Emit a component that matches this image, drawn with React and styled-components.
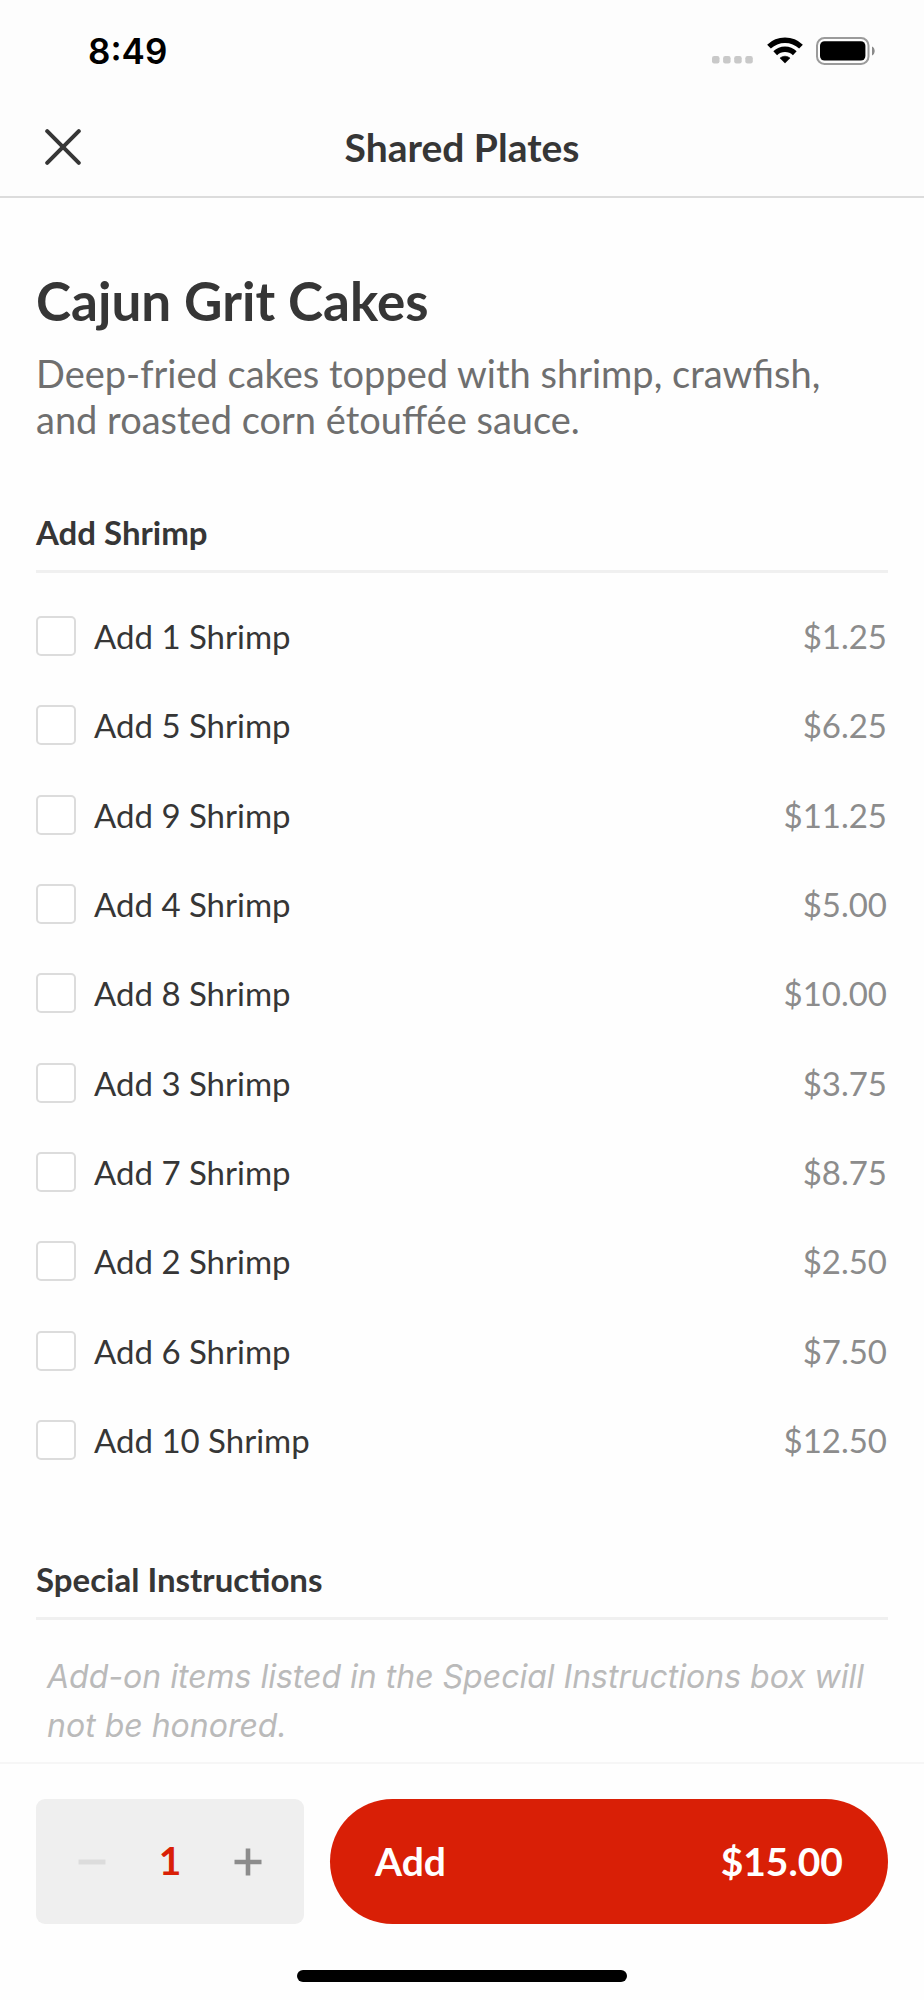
import { useState } from "react";
import styled, { createGlobalStyle } from "styled-components";

const BASE_PRICE = 15;

const shrimpOptions = [
	{ count: 1, price: 1.25 },
	{ count: 5, price: 6.25 },
	{ count: 9, price: 11.25 },
	{ count: 4, price: 5 },
	{ count: 8, price: 10 },
	{ count: 3, price: 3.75 },
	{ count: 7, price: 8.75 },
	{ count: 2, price: 2.5 },
	{ count: 6, price: 7.5 },
	{ count: 10, price: 12.5 },
];

const money = (value) => `$${value.toFixed(2)}`;

const SignalDots = () => (
	<svg width="42" height="28" viewBox="0 0 42 28" fill="#c9c9c9" aria-hidden="true">
		<rect x="0" y="19" width="7.5" height="7.5" rx="2.2" />
		<rect x="11.1" y="19" width="7.5" height="7.5" rx="2.2" />
		<rect x="22.2" y="19" width="7.5" height="7.5" rx="2.2" />
		<rect x="33.3" y="19" width="7.5" height="7.5" rx="2.2" />
	</svg>
);

const WifiIcon = () => (
	<svg width="36" height="28" viewBox="0 0 36 28" fill="none" stroke="#000" strokeWidth="5.4" aria-hidden="true">
		<path d="M2 9.6a23.3 23.3 0 0 1 32 0" />
		<path d="M8.2 16.2a14.2 14.2 0 0 1 19.6 0" />
		<path d="M13 21.1a7.5 7.5 0 0 1 10 0l-5 5z" fill="#000" stroke="#000" strokeWidth="0.6" strokeLinejoin="round" />
	</svg>
);

const BatteryIcon = () => (
	<svg width="60" height="28" viewBox="0 0 60 28" aria-hidden="true">
		<rect x="1" y="1" width="51.5" height="26" rx="7.5" fill="none" stroke="#9b9b9b" strokeWidth="2" />
		<rect x="4" y="4.3" width="45.4" height="19.2" rx="4.5" fill="#000" />
		<path d="M56 9.5c3.6 1.6 3.6 7.4 0 9z" fill="#8a8a8a" />
	</svg>
);

const CloseIcon = () => (
	<svg width="36" height="36" viewBox="0 0 36 36" fill="none" stroke="#363636" strokeWidth="4" strokeLinecap="round" aria-hidden="true">
		<path d="M2.2 2.2l31.6 31.6M33.8 2.2L2.2 33.8" />
	</svg>
);

const MinusIcon = () => (
	<svg width="28" height="28" viewBox="0 0 28 28" aria-hidden="true">
		<path d="M0.5 14h27" stroke="currentColor" strokeWidth="5" />
	</svg>
);

const PlusIcon = () => (
	<svg width="28" height="28" viewBox="0 0 28 28" aria-hidden="true">
		<path d="M0.5 14h27M14 0.5v27" stroke="currentColor" strokeWidth="4.6" />
	</svg>
);

export default function App() {
	const [selected, setSelected] = useState([]);
	const [quantity, setQuantity] = useState(1);

	const toggle = (count) => {
		setSelected((prev) =>
			prev.includes(count) ? prev.filter((c) => c !== count) : [...prev, count]
		);
	};

	const extras = shrimpOptions
		.filter((option) => selected.includes(option.count))
		.reduce((sum, option) => sum + option.price, 0);

	return (
		<>
			<GlobalStyle />
			<Page>
				<Header>
					<StatusBar>
						<Clock>8:49</Clock>
						<StatusIcons>
							<SignalDots />
							<WifiIcon />
							<BatteryIcon />
						</StatusIcons>
					</StatusBar>
					<NavBar>
						<CloseButton type="button" aria-label="Close">
							<CloseIcon />
						</CloseButton>
						<NavTitle>Shared Plates</NavTitle>
					</NavBar>
				</Header>

				<Content>
					<ItemName>Cajun Grit Cakes</ItemName>
					<Description>
						Deep-fried cakes topped with shrimp, crawfish, and roasted corn étouffée sauce.
					</Description>

					<Section $gap={70}>
						<SectionTitle>Add Shrimp</SectionTitle>
						<OptionList>
							{shrimpOptions.map(({ count, price }) => (
								<li key={count}>
									<Option>
										<Checkbox
											type="checkbox"
											checked={selected.includes(count)}
											onChange={() => toggle(count)}
										/>
										<OptionName>Add {count} Shrimp</OptionName>
										<OptionPrice>{money(price)}</OptionPrice>
									</Option>
								</li>
							))}
						</OptionList>
					</Section>

					<Section $gap={99}>
						<SectionTitle as="label" htmlFor="instructions">Special Instructions</SectionTitle>
						<Instructions
							id="instructions"
							rows={2}
							placeholder="Add-on items listed in the Special Instructions box will not be honored."
						/>
					</Section>
				</Content>

				<Footer>
					<Actions>
						<Stepper>
							<StepButton
								type="button"
								aria-label="Decrease quantity"
								disabled={quantity === 1}
								onClick={() => setQuantity(quantity - 1)}
							>
								<MinusIcon />
							</StepButton>
							<Quantity>{quantity}</Quantity>
							<StepButton
								type="button"
								aria-label="Increase quantity"
								onClick={() => setQuantity(quantity + 1)}
							>
								<PlusIcon />
							</StepButton>
						</Stepper>
						<AddButton type="button">
							<span>Add</span>
							<span>{money((BASE_PRICE + extras) * quantity)}</span>
						</AddButton>
					</Actions>
					<HomeIndicator />
				</Footer>
			</Page>
		</>
	);
}

const GlobalStyle = createGlobalStyle`
  * {
    box-sizing: border-box;
  }

  body {
    margin: 0;
    background: #fefefe;
    color: #363636;
    font-family: Lato, "Liberation Sans", sans-serif;
  }

  button, textarea, input {
    margin: 0;
    font: inherit;
  }
`

const Page = styled.div`
  min-height: 100vh;
  display: flex;
  flex-direction: column;
`

const Header = styled.header`
  background: #fdfdfd;
  border-bottom: 2px solid #dcdcdc;
`

const StatusBar = styled.div`
  display: flex;
  justify-content: space-between;
  align-items: center;
  padding: 29px 48px 27px 88px;
`

const Clock = styled.time`
  color: #000;
  font-family: Inter, "Liberation Sans", sans-serif;
  font-size: 35px;
  font-weight: 600;
  line-height: 44px;
`

const StatusIcons = styled.div`
  display: flex;
  align-items: center;
  gap: 13px;
`

const NavBar = styled.div`
  display: grid;
  grid-template-columns: 36px 1fr 36px;
  align-items: center;
  padding: 24px 45px 26px;
`

const CloseButton = styled.button`
  display: flex;
  padding: 0;
  border: 0;
  background: none;
  cursor: pointer;
`

const NavTitle = styled.div`
  font-size: 39px;
  font-weight: 700;
  line-height: 46px;
  text-align: center;
`

const Content = styled.main`
  flex: 1;
  padding: 71px 36px 0;
`

const ItemName = styled.h1`
  margin: 0 0 17px;
  font-size: 53px;
  font-weight: 700;
  line-height: 64px;
`

const Description = styled.p`
  max-width: 820px;
  margin: 0;
  color: #6f6f6f;
  font-size: 38px;
  line-height: 46px;
`

const Section = styled.section`
  margin-top: ${({ $gap }) => $gap}px;
`

const SectionTitle = styled.h2`
  display: block;
  margin: 0;
  padding-bottom: 18px;
  border-bottom: 3px solid #f0f0f0;
  font-size: 33px;
  font-weight: 700;
  line-height: 40px;
`

const OptionList = styled.ul`
  display: flex;
  flex-direction: column;
  justify-content: space-between;
  min-height: 844px;
  margin: 43px 0 0;
  padding: 0;
  list-style: none;
`

const Option = styled.label`
  display: flex;
  align-items: center;
  gap: 18px;
  padding-right: 1px;
  font-size: 33px;
  line-height: 40px;
  cursor: pointer;
`

const Checkbox = styled.input`
  appearance: none;
  width: 40px;
  height: 40px;
  border: 2px solid #dcdcdc;
  border-radius: 5px;
  background: #fff;

  &:checked {
    border-color: #d91f06;
    background: #d91f06;
  }
`

const OptionName = styled.span`
  flex: 1;
`

const OptionPrice = styled.span`
  color: #8c8c8c;
`

const Instructions = styled.textarea`
  display: block;
  width: 100%;
  margin-top: 32px;
  padding: 0 11px;
  border: 0;
  outline: 0;
  resize: none;
  overflow: hidden;
  background: transparent;
  font-family: Inter, "Liberation Sans", sans-serif;
  font-size: 32px;
  line-height: 49px;

  &::placeholder {
    color: #bababa;
    font-style: italic;
    opacity: 1;
  }
`

const Footer = styled.footer`
  position: sticky;
  bottom: 0;
  padding: 35px 36px 18px;
  border-top: 2px solid #f6f6f6;
  background: #fefefe;
`

const Actions = styled.div`
  display: flex;
  gap: 26px;
`

const Stepper = styled.div`
  display: flex;
  justify-content: space-between;
  align-items: center;
  width: 268px;
  height: 125px;
  padding: 0 42px;
  border-radius: 9px;
  background: #efefef;
`

const StepButton = styled.button`
  display: flex;
  padding: 0;
  border: 0;
  background: none;
  color: #8c8c8c;
  cursor: pointer;

  &:disabled {
    color: #dcdcdc;
    cursor: default;
  }
`

const Quantity = styled.output`
  padding-bottom: 3px;
  color: #d91f06;
  font-size: 39px;
  font-weight: 700;
  line-height: 46px;
`

const AddButton = styled.button`
  flex: 1;
  display: flex;
  justify-content: space-between;
  align-items: center;
  padding: 0 45px 2px;
  border: 0;
  border-radius: 63px;
  background: #d91f06;
  color: #fff;
  font-size: 39px;
  font-weight: 700;
  line-height: 46px;
  cursor: pointer;
`

const HomeIndicator = styled.div`
  width: 330px;
  height: 12px;
  margin: 46px auto 0;
  border-radius: 6px;
  background: #000;
`
